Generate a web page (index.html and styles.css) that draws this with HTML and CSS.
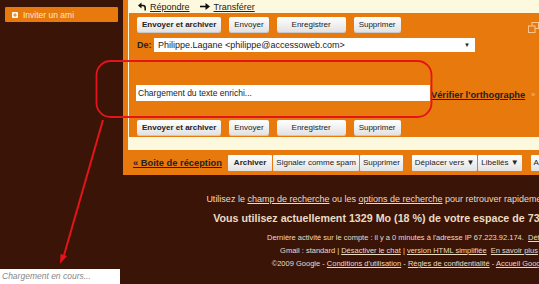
FILE: index.html
```html
<!DOCTYPE html>
<html>
<head>
    <title>Gmail - Nouveau message</title>
    <link rel="stylesheet" href="styles.css">
</head>
<body>
    <div class="page">
        <aside class="side">
            <div class="invite">
                <svg class="plus" width="6" height="6" viewBox="0 0 6 6"><rect width="6" height="6" rx="1" fill="#fff"/><path d="M3 1.2V4.8M1.2 3H4.8" stroke="#e8790c" stroke-width="1.2"/></svg>
                Inviter un ami
            </div>
            <div class="loading">Chargement en cours...</div>
        </aside>

        <main class="main">
            <div class="mailbox">
                <div class="msg">
                    <div class="replybar">
                        <svg width="8" height="9" viewBox="0 0 8 9"><path d="M3.5 0.5L0 3.5L3.5 6.5Z" fill="#111"/><path d="M3 3.5H5Q7.2 3.5 7.2 6V8.5" fill="none" stroke="#111" stroke-width="1.5"/></svg>
                        <a href="#">Répondre</a>
                        <svg class="fwd" width="10" height="9" viewBox="0 0 10 9"><path d="M0 4.5H6.5" stroke="#111" stroke-width="1.6"/><path d="M5.5 1L10 4.5L5.5 8Z" fill="#111"/></svg>
                        <a href="#">Transférer</a>
                    </div>
                    <div class="compose">
                        <div class="btnrow head">
                            <button class="btn strong">Envoyer et archiver</button>
                            <button class="btn">Envoyer</button>
                            <button class="btn wide">Enregistrer</button>
                            <button class="btn">Supprimer</button>
                            <svg class="popout" width="11" height="11" viewBox="0 0 11 11"><rect x="4" y="0.5" width="6.5" height="6" fill="none" stroke="#fbc891" stroke-width="1"/><rect x="0.5" y="4" width="6.5" height="6.5" fill="#e8790c" stroke="#fbc891" stroke-width="1"/></svg>
                        </div>
                        <div class="from">
                            <span class="label">De:</span>
                            <div class="select">
                                Philippe.Lagane &lt;philippe@accessoweb.com&gt;
                                <span class="caret">&#9660;</span>
                            </div>
                        </div>
                        <div class="editor-row">
                            <div class="editor">Chargement du texte enrichi...</div>
                            <a href="#" class="spell">Vérifier l'orthographe</a>
                            <span class="more">&raquo;</span>
                        </div>
                        <div class="btnrow">
                            <button class="btn strong">Envoyer et archiver</button>
                            <button class="btn">Envoyer</button>
                            <button class="btn wide">Enregistrer</button>
                            <button class="btn">Supprimer</button>
                        </div>
                    </div>
                </div>
                <div class="toolbar">
                    <a href="#" class="back">&laquo; Boite de réception</a>
                    <div class="group">
                        <button class="tbtn strong">Archiver</button>
                        <button class="tbtn">Signaler comme spam</button>
                        <button class="tbtn">Supprimer</button>
                    </div>
                    <div class="group">
                        <button class="tbtn">Déplacer vers &#9660;</button>
                        <button class="tbtn">Libellés &#9660;</button>
                    </div>
                    <div class="group">
                        <button class="tbtn">Autres actions &#9660;</button>
                    </div>
                </div>
            </div>

            <footer class="footer">
                <p class="f1">Utilisez le <a href="#">champ de recherche</a> ou les <a href="#">options de recherche</a> pour retrouver rapidement vos messages.</p>
                <p class="f2">Vous utilisez actuellement 1329 Mo (18 %) de votre espace de 7342 Mo.</p>
                <p class="f3">Dernière activité sur le compte : il y a 0 minutes à l'adresse IP 67.223.92.174. &nbsp;<a href="#">Détails</a></p>
                <p class="f3">Gmail : standard | <a href="#">Désactiver le chat</a> | <a href="#">version HTML simplifiée</a> &nbsp;<a href="#">En savoir plus</a></p>
                <p class="f3 f5">&copy;2009 Google - <a href="#">Conditions d'utilisation</a> - <a href="#">Règles de confidentialité</a> - <a href="#">Accueil Google</a></p>
            </footer>
        </main>
    </div>

    <!-- annotation drawn over the screenshot -->
    <svg class="annot" width="539" height="284" viewBox="0 0 539 284">
        <rect x="96.5" y="61" width="335" height="56" rx="14" fill="none" stroke="#e3141a" stroke-width="1.8"/>
        <path d="M103 120L63.5 257" stroke="#e3141a" stroke-width="2"/>
        <path d="M60 264L60.5 254L67 256Z" fill="#e3141a"/>
    </svg>
</body>
</html>
```

FILE: styles.css
```css
:root {
    --orange: #e8790c;
    --brown: #3b1408;
    --cream: #fdf9de;
    --ink: #222;
    --foot: #e9dcc2;
}
html, body { margin: 0; height: 100%; overflow: hidden; }
body { background: var(--brown); font-family: "Liberation Sans", Arial, sans-serif; color: var(--ink); }
a { color: var(--ink); }
button { font-family: inherit; }

.page { display: flex; width: 700px; height: 284px; }

/* left column */
.side { width: 123px; flex: none; display: flex; flex-direction: column; }
.invite { margin: 7px 5px 0 5px; height: 15px; padding-left: 7px; background: var(--orange); color: #fbe6cf; font-size: 8.5px; display: flex; align-items: center; gap: 5px; border-radius: 1px; }
.loading { margin-top: auto; margin-bottom: 0; width: 118px; height: 15px; padding-left: 2px; background: #fff; color: #888; font-style: italic; font-size: 8.5px; line-height: 15px; }

/* message area */
.main { width: 572px; flex: none; }
.mailbox { background: var(--orange); padding-left: 5px; }
.msg { background: var(--cream); padding-bottom: 13px; }
.replybar { height: 13px; padding-left: 10px; display: flex; align-items: center; gap: 4px; font-size: 9px; }
.replybar .fwd { margin-left: 6px; }

.compose { background: var(--orange); margin-left: 1px; padding: 4px 0 2px 8px; }
.btnrow { display: flex; align-items: center; gap: 8px; height: 15px; }
.btnrow.head { width: 402px; }
.popout { margin-left: auto; align-self: flex-start; margin-top: 5px; }
.btn { height: 15px; padding: 0 5px; border: 0; border-radius: 2px; background: linear-gradient(#fff, #e2e2e2); color: var(--ink); font-size: 8px; box-shadow: 0 1px 0 #c9c9c9; }
.btn.strong, .tbtn.strong { font-weight: bold; }
.btn.wide { min-width: 69px; }

.from { display: flex; align-items: center; margin-top: 6px; }
.label { font-weight: bold; font-size: 9px; width: 17px; }
.select { position: relative; width: 317px; height: 14px; padding-left: 4px; background: #fff; font-size: 9px; line-height: 14px; }
.caret { position: absolute; right: 5px; top: 0; font-size: 6px; }

.editor-row { display: flex; align-items: flex-end; margin-top: 33px; margin-left: -1px; }
.editor { width: 292px; height: 16px; padding-left: 2px; background: #fff; font-size: 8.5px; line-height: 16px; }
.spell { margin-left: 1px; font-weight: bold; font-size: 9.3px; line-height: 12px; }
.more { margin-left: 6px; color: #f7c28b; font-size: 7px; line-height: 12px; }
.compose > .btnrow:last-child { margin-top: 19px; }

/* toolbar under the message */
.toolbar { height: 25px; padding-left: 5px; display: flex; align-items: center; gap: 6px; }
.back { font-weight: bold; font-size: 9.3px; }
.group { display: flex; gap: 1px; }
.group + .group { margin-left: 3px; }
.tbtn { height: 16px; padding: 0 3px; border: 0; border-radius: 1px; background: linear-gradient(#fff, #e2e2e2); color: var(--ink); font-size: 8px; }
.tbtn.strong { padding: 0 6px; }

/* footer */
.footer { color: var(--foot); text-align: center; padding-top: 19px; white-space: nowrap; }
.footer p { margin: 0; }
.footer a { color: var(--foot); }
.f1 { font-size: 9px; }
.f2 { font-size: 10.7px; font-weight: bold; margin-top: 8px !important; padding-right: 32px; }
.f3 { font-size: 7.5px; margin-top: 9px !important; }
.f3 + .f3 { margin-top: 4px !important; }
.f5 { margin-top: 10px !important; }

.annot { position: absolute; left: 0; top: 0; pointer-events: none; }
```
